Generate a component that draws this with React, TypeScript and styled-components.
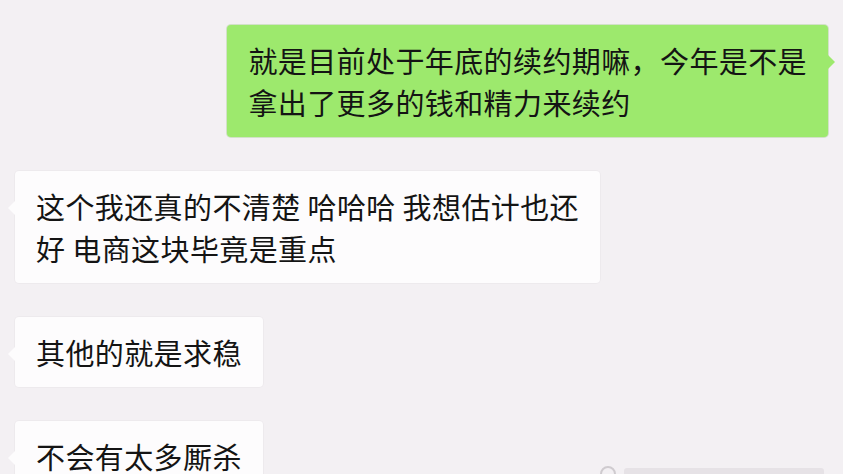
import React from 'react';
import styled, { createGlobalStyle } from 'styled-components';

const GlobalStyle = createGlobalStyle`
  html, body {
    margin: 0;
    padding: 0;
    width: 843px;
    height: 474px;
    overflow: hidden;
    background: #f3f0f3;
  }
`;

//--------------- STYLES
const Screen = styled.div`
  position: relative;
  width: 843px;
  height: 474px;
  overflow: hidden;
  background: #f3f0f3;
  font-family: "Noto Sans CJK SC", "Noto Sans", sans-serif;
`;

const Thread = styled.div`
  display: flex;
  flex-direction: column;
  gap: 34px;
  padding: 25px 15px 0 15px;
`;

const Row = styled.div<{ $mine?: boolean }>`
  display: flex;
  justify-content: ${(p) => (p.$mine ? 'flex-end' : 'flex-start')};
`;

const Bubble = styled.div<{ $mine?: boolean }>`
  position: relative;
  padding: 14px 21px;
  border-radius: 4px;
  background: ${(p) => (p.$mine ? '#9de96d' : '#fdfcfd')};
  box-shadow: 0 0 0 1px ${(p) => (p.$mine ? 'rgba(110,180,70,0.25)' : 'rgba(0,0,0,0.025)')};
  color: #141414;
  font-size: 29px;
  letter-spacing: 0.4px;
  line-height: 42px;
  white-space: pre;

  &::after {
    content: "";
    position: absolute;
    top: 30px;
    ${(p) => (p.$mine ? 'right: -7px;' : 'left: -7px;')}
    border-top: 7px solid transparent;
    border-bottom: 7px solid transparent;
    ${(p) =>
      p.$mine
        ? 'border-left: 7px solid #9de96d;'
        : 'border-right: 7px solid #fdfcfd;'}
  }
`;

// faint watermark peeking in at the bottom edge
const Watermark = styled.div`
  position: absolute;
  left: 600px;
  top: 466px;
  display: flex;
  align-items: center;
  gap: 8px;
`;

const Ring = styled.span`
  width: 16px;
  height: 16px;
  border-radius: 50%;
  border: 2px solid #cfcbcf;
  box-sizing: border-box;
`;

const Smudge = styled.span`
  width: 200px;
  height: 12px;
  border-radius: 3px;
  background: #e6e2e6;
`;

//--------------- DATA
const messages: { mine?: boolean; text: string }[] = [
  { mine: true, text: '就是目前处于年底的续约期嘛，今年是不是\n拿出了更多的钱和精力来续约' },
  { text: '这个我还真的不清楚 哈哈哈 我想估计也还\n好 电商这块毕竟是重点' },
  { text: '其他的就是求稳' },
  { text: '不会有太多厮杀' },
];

//--------------- COMPONENT
export default function App() {
  return (
    <Screen>
      <GlobalStyle />
      <Thread>
        {messages.map((m, i) => (
          <Row key={i} $mine={m.mine}>
            <Bubble $mine={m.mine}>{m.text}</Bubble>
          </Row>
        ))}
      </Thread>
      <Watermark>
        <Ring />
        <Smudge />
      </Watermark>
    </Screen>
  );
}
